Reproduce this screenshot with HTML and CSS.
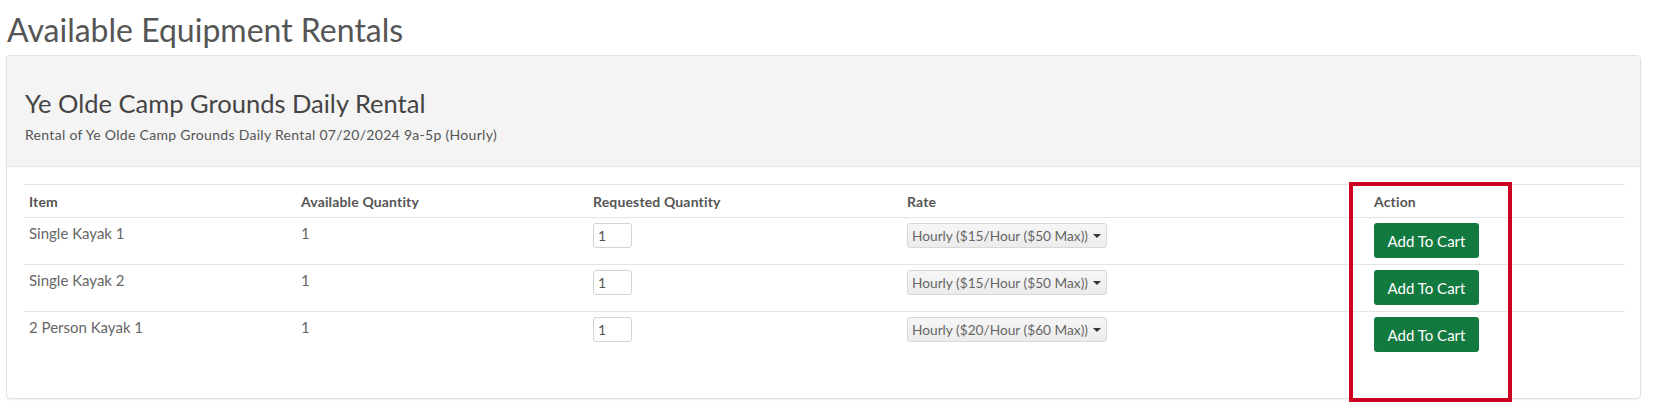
FILE: index.html
```html
<!DOCTYPE html>
<html lang="en">
<head>
    <meta http-equiv="Content-Type" content="text/html; charset=UTF-8">
    <meta name="viewport" content="width=device-width, initial-scale=1.0">
    <title>Available Equipment Rentals</title>
    <link rel="stylesheet" href="styles.css">
</head>
<body>
    <h1 class="page-title">Available Equipment Rentals</h1>

    <!-- Rental panel -->
    <div class="panel">
        <div class="panel-heading">
            <h2 class="panel-title">Ye Olde Camp Grounds Daily Rental</h2>
            <p class="panel-sub">Rental of Ye Olde Camp Grounds Daily Rental 07/20/2024 9a-5p (Hourly)</p>
        </div>
        <div class="panel-body">
            <div class="table-wrap">
                <table class="rental-table">
                    <thead>
                        <tr>
                            <th class="col-item">Item</th>
                            <th class="col-avail">Available Quantity</th>
                            <th class="col-req">Requested Quantity</th>
                            <th class="col-rate">Rate</th>
                            <th class="col-action">Action</th>
                        </tr>
                    </thead>
                    <tbody>
                        <tr>
                            <td>Single Kayak 1</td>
                            <td>1</td>
                            <td><input class="qty-input" type="text" value="1"></td>
                            <td>
                                <span class="rate-select">
                                    <select><option>Hourly ($15/Hour ($50 Max))</option></select>
                                </span>
                            </td>
                            <td><button class="cart-button">Add To Cart</button></td>
                        </tr>
                        <tr>
                            <td>Single Kayak 2</td>
                            <td>1</td>
                            <td><input class="qty-input" type="text" value="1"></td>
                            <td>
                                <span class="rate-select">
                                    <select><option>Hourly ($15/Hour ($50 Max))</option></select>
                                </span>
                            </td>
                            <td><button class="cart-button">Add To Cart</button></td>
                        </tr>
                        <tr>
                            <td>2 Person Kayak 1</td>
                            <td>1</td>
                            <td><input class="qty-input" type="text" value="1"></td>
                            <td>
                                <span class="rate-select">
                                    <select><option>Hourly ($20/Hour ($60 Max))</option></select>
                                </span>
                            </td>
                            <td><button class="cart-button">Add To Cart</button></td>
                        </tr>
                    </tbody>
                </table>

                <!-- Red annotation around the Action column -->
                <div class="highlight-box"></div>
            </div>
        </div>
    </div>
</body>
</html>
```

FILE: styles.css
```css
body {
    margin: 0;
    padding: 0 30px 20px 6px;
    font-family: 'Lato', 'Liberation Sans', sans-serif;
    color: #666;
    background-color: #fff;
}
.page-title {
    font-size: 32px;
    font-weight: 400;
    line-height: 1.1;
    color: #555;
    margin: 12px 0 8px 1px;
}
.panel {
    border: 1px solid #e2e2e2;
    border-radius: 4px;
    box-shadow: 0 1px 2px rgba(0, 0, 0, 0.06);
    background-color: #fff;
}
.panel-heading {
    background-color: #f4f4f4;
    border-bottom: 1px solid #e6e6e6;
    border-radius: 4px 4px 0 0;
    padding: 32px 18px 22px;
}
.panel-title {
    font-size: 25.5px;
    font-weight: 400;
    line-height: 30px;
    color: #444;
    margin: 0 0 8px;
}
.panel-sub {
    font-size: 14px;
    letter-spacing: 0.3px;
    line-height: 18px;
    color: #555;
    margin: 0;
}
.panel-body {
    padding: 17px 15px 40px 17px;
}
.table-wrap {
    position: relative;
}
.rental-table {
    width: 100%;
    border-collapse: collapse;
    table-layout: fixed;
}
.rental-table th {
    text-align: left;
    font-size: 14px;
    letter-spacing: 0.15px;
    font-weight: 700;
    line-height: 17px;
    color: #555;
    padding: 8px 5px 7px;
    border-top: 1px solid #e4e4e4;
    border-bottom: 1px solid #e4e4e4;
}
.rental-table td {
    font-size: 15px;
    line-height: 21px;
    color: #666;
    vertical-align: top;
    padding: 5px 5px 6px;
    border-bottom: 1px solid #e4e4e4;
}
.rental-table tbody tr:last-child td {
    border-bottom: none;
}
.col-item { width: 262px; }
.col-avail { width: 282px; }
.col-req { width: 304px; }
.col-rate { width: 457px; }

.qty-input {
    box-sizing: border-box;
    width: 39px;
    height: 25px;
    padding: 2px 4px;
    border: 1px solid #d4d4d4;
    border-radius: 3px;
    font-family: 'Lato', 'Liberation Sans', sans-serif;
    font-size: 14px;
    color: #555;
    display: block;
}
.rate-select {
    position: relative;
    display: block;
    width: 200px;
}
.rate-select select {
    -webkit-appearance: none;
    appearance: none;
    box-sizing: border-box;
    width: 200px;
    height: 25px;
    padding: 0 18px 0 4px;
    border: 1px solid #d8d8d8;
    border-radius: 3px;
    background: linear-gradient(#f6f6f6, #ececec);
    font-family: 'Lato', 'Liberation Sans', sans-serif;
    font-size: 13.7px;
    color: #666;
    display: block;
}
.rate-select::after {
    content: '';
    position: absolute;
    right: 6px;
    top: 11px;
    border-left: 4px solid transparent;
    border-right: 4px solid transparent;
    border-top: 4px solid #333;
    pointer-events: none;
}
.cart-button {
    box-sizing: border-box;
    width: 105px;
    height: 35px;
    border: none;
    border-radius: 3px;
    background-color: #137a3f;
    color: #fff;
    font-family: 'Lato', 'Liberation Sans', sans-serif;
    font-size: 15px;
    cursor: pointer;
    display: block;
}
.cart-button:hover {
    background-color: #0f6633;
}
.highlight-box {
    position: absolute;
    left: 1325px;
    top: -2px;
    width: 155px;
    height: 212px;
    border: 4px solid #cc0020;
    pointer-events: none;
}
```
